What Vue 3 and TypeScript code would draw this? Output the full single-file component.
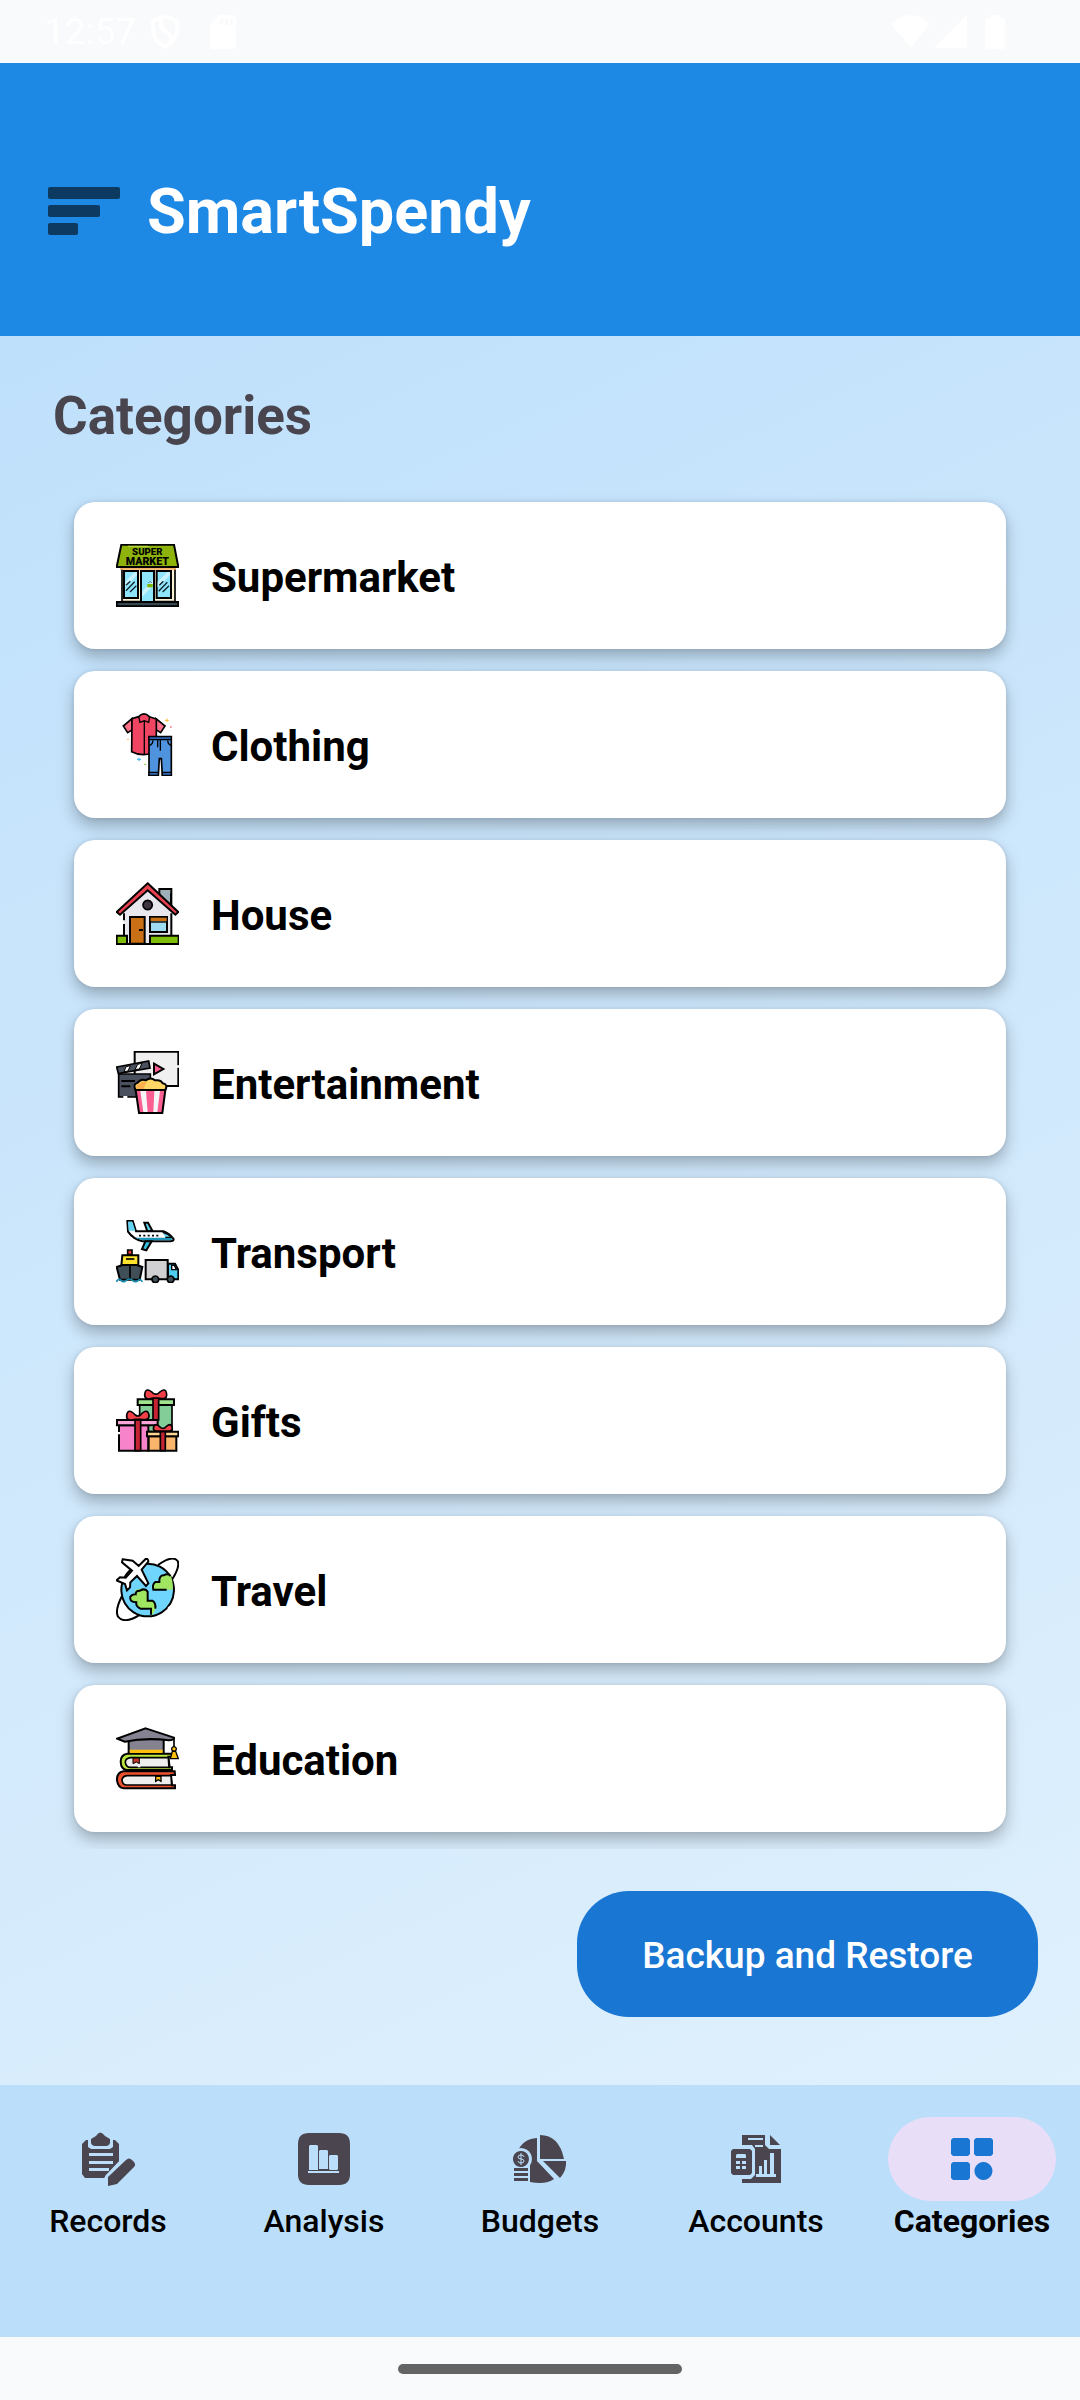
<script setup lang="ts">
interface Shape {
  d: string
  fill?: string
  stroke?: string
  w?: number
}

interface Category {
  name: string
  viewBox: string
  shapes: Shape[]
  sign?: { text: string; x: number; y: number; size: number }[]
}

interface NavItem {
  name: string
  active?: boolean
  shapes: Shape[]
}

const ink = '#4a454f'
const bar = '#bbdefb'
const accent = '#1976d2'

const categories: Category[] = [
  {
    name: 'Supermarket',
    viewBox: '48 72 189 189',
    shapes: [
      { d: 'M66 143H225V245H66Z', fill: '#fff3d6', w: 5 },
      { d: 'M60 144H228V149H60Z', fill: '#f7b267', w: 0 },
      { d: 'M72 153H114V234H72Z', fill: '#8fe5fb', w: 6 },
      { d: 'M170 153H213V234H170Z', fill: '#8fe5fb', w: 6 },
      { d: 'M123 153H162V246H123Z', fill: '#8fe5fb', w: 6 },
      { d: 'M76 185L104 156H111V166L76 202ZM173 185L202 156H210V166L173 202ZM126 215L159 180V197L126 231Z', fill: '#c9f4ff', w: 0 },
      { d: 'M78 196L91 184M78 212L104 185M90 216L109 197M178 196L190 184M176 214L202 187M188 216L207 197', stroke: '#10222b', w: 4 },
      { d: 'M142 192H158V202H142Z', fill: '#7cb500', w: 0 },
      { d: 'M145 189L150 184L156 189', stroke: '#6b7b86', w: 3 },
      { d: 'M64 74H222L235 141H50Z', fill: '#8eb40c', w: 6 },
      { d: 'M84 79H145', stroke: '#bfe04d', w: 3 },
      { d: 'M50 246H235V259H50Z', fill: '#37474f', w: 6 }
    ],
    sign: [
      { text: 'SUPER', x: 142, y: 105, size: 29 },
      { text: 'MARKET', x: 142, y: 135, size: 32 }
    ]
  },
  {
    name: 'Clothing',
    viewBox: '48 69 189 189',
    shapes: [
      { d: 'M96 86L70 108L83 128L98 119ZM168 86L195 108L182 128L168 119Z', fill: '#fb6f88', w: 5 },
      { d: 'M96 86L116 80Q132 64 148 80L169 87V192H146Q120 198 95 185Z', fill: '#ef4562', w: 5 },
      { d: 'M116 79L120 97L133 92L146 97L149 79M133 92V193', w: 4 },
      { d: 'M147 140H214V256H187L184 206H178L175 256H147Z', fill: '#4f92de', w: 5 },
      { d: 'M147 140H214V149H147Z', fill: '#2b62b0', w: 4 },
      { d: 'M147 247H175V256H147ZM187 247H214V256H187Z', fill: '#2f66b5', w: 4 },
      { d: 'M159 151Q158 163 149 166M203 151Q204 163 213 166M181 149V182M173 150V172', w: 4 },
      { d: 'M195 91H207M201 86V96', stroke: '#f8b739', w: 3 },
      { d: 'M111 208H123M117 203V213', stroke: '#55bff0', w: 4 },
      { d: 'M210 111H215', stroke: '#fb6f88', w: 4 },
      { d: 'M81 148H87', stroke: '#f8c04d', w: 3 },
      { d: 'M132 223H138', stroke: '#8ac926', w: 3 }
    ]
  },
  {
    name: 'House',
    viewBox: '48 66 189 189',
    shapes: [
      { d: 'M178 87H214V150L178 122Z', fill: '#9fb0b8', w: 6 },
      { d: 'M143 92L214 153V251H72V153Z', fill: '#e8e7ee', w: 0 },
      { d: 'M72 160V181M72 192V250M214 160V226M213 100V136', w: 6 },
      { d: 'M143 70L235 156L226 164L143 91L60 164L50 156Z', fill: '#e8414f', w: 6 },
      { d: 'M143 121A14 14 0 1 1 142.9 121Z', fill: '#3f3542', w: 5 },
      { d: 'M90 171H134V251H90Z', fill: '#c96f16', w: 6 },
      { d: 'M117 210H129', w: 6 },
      { d: 'M150 171H201V216H150Z', fill: '#9fdcf3', w: 6 },
      { d: 'M152 173H200V184H152Z', fill: '#c96f16', w: 0 },
      { d: 'M150 186H201', w: 4 },
      { d: 'M50 227H81V252H50ZM150 227H236V252H150Z', fill: '#7fbf0b', w: 6 },
      { d: 'M82 252H150', w: 6 }
    ]
  },
  {
    name: 'Entertainment',
    viewBox: '48 63 189 189',
    shapes: [
      { d: 'M104 65H235V168H104Z', fill: '#f0f0f0', w: 6 },
      { d: 'M231 106H240V113H231Z', fill: '#fff', w: 0 },
      { d: 'M162 101L190 117L162 133Z', fill: '#fb5f92', w: 6 },
      { d: 'M56 132H151V201H56Z', fill: '#4b505f', w: 5 },
      { d: 'M50 111L146 93L150 114L55 131Z', fill: '#4b505f', w: 5 },
      { d: 'M78 110L91 107L84 123L72 125ZM113 103L126 100L118 117L105 119Z', fill: '#fff', w: 3 },
      { d: 'M64 153H105M64 169H91', w: 6 },
      { d: 'M107 180H196L187 249H117Z', fill: '#fb5f92', w: 6 },
      { d: 'M121 183H138L143 246H130ZM163 183H180L172 246H160Z', fill: '#f5f5f8', w: 0 },
      { d: 'M107 180Q97 162 113 158Q123 145 137 151Q152 140 165 151Q183 148 188 160Q205 163 196 180Z', fill: '#ffd766', w: 6 },
      { d: 'M110 177Q105 163 119 161Q129 152 140 156L130 177Z', fill: '#fbb04e', w: 0 },
      { d: 'M70 201H82', stroke: '#fff', w: 6 }
    ]
  },
  {
    name: 'Transport',
    viewBox: '48 60 189 189',
    shapes: [
      { d: 'M133 68H144L158 94H142Z', fill: '#62d4f2', w: 6 },
      { d: 'M82 62H98L108 94H190Q207 99 221 117Q221 124 210 124H128Q100 118 84 95Z', fill: '#fff', w: 6 },
      { d: 'M84 65H97L106 92H86Z', fill: '#62d4f2', w: 0 },
      { d: 'M103 113H216Q218 121 208 121H128Z', fill: '#1e94b6', w: 0 },
      { d: 'M117 107H123M130 107H136M143 107H149M156 107H162M169 107H175', w: 5 },
      { d: 'M188 97Q206 102 215 112H196', fill: '#62d4f2', w: 4 },
      { d: 'M136 124L126 147L139 151L155 124Z', fill: '#38bcdd', w: 6 },
      { d: 'M83 150H96V164H83Z', fill: '#e23c2f', w: 5 },
      { d: 'M67 166H115V197H64Z', fill: '#ffe32e', w: 6 },
      { d: 'M78 177H103', w: 5 },
      { d: 'M50 201L68 195H110L127 201L119 239H60Z', fill: '#3f4e57', w: 6 },
      { d: 'M90 194V240', w: 5 },
      { d: 'M49 246Q55 233 63 241Q70 249 79 241Q89 233 98 241Q106 249 115 241Q122 235 127 246', stroke: '#168cb0', w: 5 },
      { d: 'M137 180H203V238H137Z', fill: '#d0d0d2', w: 6 },
      { d: 'M204 191H225L235 210V238H204Z', fill: '#4fcdf0', w: 6 },
      { d: 'M215 196H223L229 209H215Z', fill: '#fff', w: 4 },
      { d: 'M166 228A10 10 0 1 1 165.900 228ZM212 228A10 10 0 1 1 211.900 228Z', fill: '#3f4e57', w: 5 }
    ]
  },
  {
    name: 'Gifts',
    viewBox: '48 57 189 189',
    shapes: [
      { d: 'M119 105H216V185H119Z', fill: '#83ce98', w: 5 },
      { d: 'M113 88H222V105H113Z', fill: '#9fe391', w: 6 },
      { d: 'M159 84H176V150H159Z', fill: '#c42434', w: 5 },
      { d: 'M160 84Q134 92 134 74Q137 48 160 70Q168 75 175 70Q198 48 200 74Q201 91 176 84Z', fill: '#f24049', w: 5 },
      { d: 'M57 166H145V242H57Z', fill: '#f783ca', w: 6 },
      { d: 'M51 150H173V166H51Z', fill: '#f9a5d8', w: 6 },
      { d: 'M105 150H122V242H105Z', fill: '#c42434', w: 5 },
      { d: 'M105 148Q78 155 80 136Q84 112 106 135Q114 141 121 135Q143 112 147 136Q149 152 122 148Z', fill: '#f24049', w: 5 },
      { d: 'M146 199H229V242H146Z', fill: '#fab56d', w: 6 },
      { d: 'M141 185H235V199H141Z', fill: '#ffd391', w: 6 },
      { d: 'M181 185H196V242H181Z', fill: '#c42434', w: 5 },
      { d: 'M181 183Q156 186 161 171Q166 156 182 173Q188 177 195 173Q212 156 216 171Q221 186 196 183Z', fill: '#f24049', w: 5 },
      { d: 'M57 186V193', stroke: '#fff', w: 6 }
    ]
  },
  {
    name: 'Travel',
    viewBox: '48 54 189 189',
    shapes: [
      { d: 'M174 75Q218 44 233 63Q242 84 207 132Q169 186 120 224Q74 254 54 230Q44 211 66 168', w: 6 },
      { d: 'M143 71A79 79 0 1 1 142.900 71Z', fill: '#70d5fc', w: 6 },
      { d: 'M183 107Q200 98 212 107Q220 125 218 149H159Q156 132 166 124H180Z', fill: '#a0e661', w: 0 },
      { d: 'M200 149H160Q156 133 166 126H178Q177 106 191 106Q204 99 212 108', w: 6 },
      { d: 'M105 151Q127 140 144 153V181H158Q168 187 166 205Q163 224 153 226V206H121Q107 199 109 187Q87 186 91 170Q95 162 107 163Z', fill: '#a0e661', w: 0 },
      { d: 'M153 224V206H121Q106 199 109 187Q87 186 91 170Q97 162 107 163Q107 151 120 152Q136 143 143 155V182H157Q168 188 166 206', w: 6 },
      { d: 'M68 58L98 62L116 78L137 57Q145 55 145 65L125 89L145 130L138 138L111 108L91 127L90 142L81 151L75 132L50 121L60 112L77 113L96 92L66 67Z', fill: '#fff', w: 6 },
      { d: 'M204 206L209 200', stroke: '#fff', w: 5 }
    ]
  },
  {
    name: 'Education',
    viewBox: '48 51 189 189',
    shapes: [
      { d: 'M216 131H82Q62 134 62 155Q63 178 80 180H216V172H209L205 140H216Z', fill: '#b9e63e', w: 6 },
      { d: 'M205 143H91Q76 145 76 157Q78 171 90 172H207Z', fill: '#eee', w: 5 },
      { d: 'M224 184H70Q50 188 51 211Q54 233 71 235H225V226H216L213 195H225Z', fill: '#ed512e', w: 6 },
      { d: 'M213 197H81Q66 199 66 211Q68 225 80 225H215Z', fill: '#eee', w: 5 },
      { d: 'M99 144H118V161L109 156L99 161Z', fill: '#c33628', w: 3 },
      { d: 'M167 199H183V214L175 209L167 214Z', fill: '#ffc10b', w: 4 },
      { d: 'M86 88H191V128H86Z', fill: '#858391', w: 6 },
      { d: 'M89 119H188V129H89Z', fill: '#ffc10b', w: 0 },
      { d: 'M137 55L222 83Q222 90 206 91Q138 82 74 95L52 86Z', fill: '#858391', w: 6 },
      { d: 'M222 85V113', w: 5 },
      { d: 'M222 110A7 7 0 1 1 221.900 110Z', fill: '#ffc10b', w: 4 },
      { d: 'M217 124H227L235 146H211Z', fill: '#ffc10b', w: 4 },
      { d: 'M113 169H121', stroke: '#fff', w: 6 }
    ]
  }
]

const navItems: NavItem[] = [
  {
    name: 'Records',
    shapes: [
      { d: 'M9 12H38L42 16V34L27 50H8L5 46V16Z', fill: ink },
      { d: 'M11 9H36V19L33 21H14L11 19Z', fill: bar },
      { d: 'M14 11L19 8Q23 1 28 8L33 11V15Q32 18 29 18H18Q15 18 14 15Z', fill: ink },
      { d: 'M12 25H36V28H12ZM12 33H36V36H12ZM12 40H32V43H12Z', fill: bar },
      { d: 'M29 59L28 48L46 29H56L60 38L42 59Z', fill: bar },
      { d: 'M49 32Q52 29 55 32Q60 36 57 39L40 56L31 58V49Z', fill: ink }
    ]
  },
  {
    name: 'Analysis',
    shapes: [
      { d: 'M16 5H46Q57 5 57 16V46Q57 57 46 57H16Q5 57 5 46V16Q5 5 16 5Z', fill: ink },
      { d: 'M17 17H24L25 18V42H16V18ZM27 22H34L35 23V41H26V23ZM37 27H44L45 28V41L44 42H37L36 41V28ZM15 43H46V45H15Z', fill: bar }
    ]
  },
  {
    name: 'Budgets',
    shapes: [
      { d: 'M28 10V33L45 51Q37 57 21 54V38L8 25Q13 11 28 10Z', fill: ink },
      { d: 'M31 7Q50 7 55 31H31ZM34 33H57Q58 42 51 50Z', fill: ink },
      { d: 'M12 20A11 11 0 1 1 11.900 20Z', fill: bar },
      { d: 'M2 37H21V56H2Z', fill: bar },
      { d: 'M12 23A8 8 0 1 1 11.900 23Z', fill: ink },
      { d: 'M15 29Q15 27 12 27T9 29T12 31T15 33T12 35T9 33M12 25V37', stroke: bar, w: 1 },
      { d: 'M5 40H19V43H5ZM5 45H19V48H5ZM5 50H19V53H5Z', fill: ink }
    ]
  },
  {
    name: 'Accounts',
    shapes: [
      { d: 'M17 7H40V17L44 21H56V55H17V51H26L30 47V21L27 17H17Z', fill: ink },
      { d: 'M45 7L55 17H45Z', fill: ink },
      { d: 'M23 10H38V12H23ZM30 17H38V19H30Z', fill: bar },
      { d: 'M34 38H37V46H39V32H42V46H45V25H49V46H51V49H31V46H34Z', fill: bar },
      { d: 'M8 21H25L27 23V45L25 47H8L6 45V23Z', fill: ink },
      { d: 'M11 27L12 26H20L21 27V30H11ZM11 33H15V36H11ZM17 33H21V36H17ZM11 38H15V41H11ZM17 38H21V41H17Z', fill: bar }
    ]
  },
  {
    name: 'Categories',
    active: true,
    shapes: [
      { d: 'M12 10H27L29 12V26L27 28H12L10 26V12ZM35 10H50L52 12V26L50 28H35L33 26V12ZM12 34H27L29 36V50L27 52H12L10 50V36Z', fill: accent },
      { d: 'M42.500 34A9 9 0 1 1 42.400 34Z', fill: accent }
    ]
  }
]
</script>

<template>
  <div class="screen">
    <div class="status">
      <div class="status-group">
        <span class="clock">12:57</span>
        <svg class="shield" viewBox="0 0 30 36" aria-hidden="true">
          <path d="M15 2L27 7V16Q26 28 15 33Q4 28 3 16V7ZM11 4V12Q12 16 19 20Q23 24 20 29" fill="none" stroke="#fff" stroke-width="4" />
        </svg>
        <svg class="card-chip" viewBox="0 0 26 34" aria-hidden="true">
          <path d="M10 0H24L26 2V32L24 34H2L0 32V10Z" fill="#fff" />
          <path d="M10 4H13V10H10ZM15 4H18V10H15ZM20 4H23V10H20Z" fill="#f9fafc" />
        </svg>
      </div>
      <div class="status-group">
        <svg class="signals" viewBox="0 0 114 34" aria-hidden="true">
          <path d="M0 9Q20 -9 39 9L20 33ZM76 0V33H43ZM100 0H108V3H112L114 5V32L112 34H96L94 32V5L96 3H100Z" fill="#fff" />
        </svg>
      </div>
    </div>

    <div class="app">
      <header class="topbar">
        <button class="menu" type="button" aria-label="Menu">
          <span class="line long"></span>
          <span class="line mid"></span>
          <span class="line short"></span>
        </button>
        <h1>SmartSpendy</h1>
      </header>

      <main>
        <h2>Categories</h2>
        <ul class="list">
          <li v-for="c in categories" :key="c.name">
            <button class="card" type="button">
              <svg class="picture" :viewBox="c.viewBox" aria-hidden="true">
                <path
                  v-for="(s, i) in c.shapes"
                  :key="i"
                  :d="s.d"
                  :fill="s.fill ?? 'none'"
                  :stroke="s.w ? (s.stroke ?? '#000') : 'none'"
                  :stroke-width="s.w"
                />
                <text v-for="t in c.sign" :key="t.text" :x="t.x" :y="t.y" :font-size="t.size" class="sign">{{ t.text }}</text>
              </svg>
              <span class="name">{{ c.name }}</span>
            </button>
          </li>
        </ul>
        <button class="backup" type="button">Backup and Restore</button>
      </main>

      <nav>
        <a v-for="n in navItems" :key="n.name" href="#" :class="{ active: n.active }">
          <span class="pill">
            <svg viewBox="0 0 63 63" aria-hidden="true">
              <path
                v-for="(s, i) in n.shapes"
                :key="i"
                :d="s.d"
                :fill="s.fill ?? 'none'"
                :stroke="s.stroke ?? 'none'"
                :stroke-width="s.w"
              />
            </svg>
          </span>
          <span class="label">{{ n.name }}</span>
        </a>
      </nav>
    </div>

    <div class="gesture"><span></span></div>
  </div>
</template>

<style>
body {
  background: #f9fafc;
}
</style>

<style scoped>
.screen {
  display: flex;
  flex-direction: column;
  min-height: 100vh;
  font-family: Roboto, sans-serif;
  color: #000;
}

button {
  border: 0;
  padding: 0;
  font-family: inherit;
  cursor: pointer;
}

.status {
  display: flex;
  align-items: center;
  justify-content: space-between;
  height: 63px;
  padding: 0 75px 0 44px;
  color: #fff;
}

.status-group {
  display: flex;
  align-items: center;
}

.clock {
  font-size: 37px;
  line-height: 44px;
}

.shield {
  width: 30px;
  height: 36px;
  margin-left: 14px;
}

.card-chip {
  width: 26px;
  height: 34px;
  margin-left: 30px;
}

.signals {
  width: 114px;
  height: 34px;
}

.app {
  flex: 1;
  display: flex;
  flex-direction: column;
  background: linear-gradient(155deg, #bbdefb, #e3f2fd);
}

.topbar {
  display: flex;
  align-items: center;
  gap: 27px;
  padding: 112px 48px 87px;
  background: #1e88e5;
}

.menu {
  display: flex;
  flex-direction: column;
  gap: 6px;
  width: 72px;
  padding-bottom: 3px;
  background: none;
}

.line {
  height: 12px;
  border-radius: 2px;
  background: #0d3a60;
}

.long {
  width: 72px;
}

.mid {
  width: 52px;
}

.short {
  width: 30px;
}

h1 {
  margin: 0;
  font-size: 63px;
  line-height: 74px;
  font-weight: 700;
  color: #fff;
}

main {
  flex: 1;
  display: flex;
  flex-direction: column;
}

h2 {
  margin: 49px 53px 33px;
  font-size: 53px;
  line-height: 62px;
  font-weight: 700;
  color: #49454f;
}

.list {
  display: flex;
  flex-direction: column;
  gap: 22px;
  margin: 0;
  padding: 22px 74px 17px;
  list-style: none;
  overflow: hidden;
}

.card {
  display: flex;
  align-items: center;
  gap: 32px;
  width: 100%;
  height: 147px;
  padding: 0 42px;
  border-radius: 21px;
  background: #fff;
  box-shadow: 0 8px 16px rgba(0, 0, 0, 0.26), 0 0 4px rgba(0, 0, 0, 0.1);
  font-size: 42px;
  line-height: 50px;
  font-weight: 700;
  color: #000;
}

.name {
  padding-top: 4px;
}

.picture {
  width: 63px;
  height: 63px;
}

.sign {
  font-family: Roboto, sans-serif;
  font-weight: 900;
  text-anchor: middle;
}

.backup {
  align-self: flex-end;
  min-width: 461px;
  margin: 42px 42px 68px;
  padding: 43px 63px 39px;
  border-radius: 52px;
  background: #1976d2;
  font-size: 37px;
  line-height: 44px;
  font-weight: 500;
  color: #fff;
}

nav {
  display: flex;
  padding: 32px 0 96px;
  background: #bbdefb;
}

nav a {
  flex: 1;
  display: flex;
  flex-direction: column;
  align-items: center;
  color: #000;
  text-decoration: none;
}

.pill {
  display: flex;
  align-items: center;
  justify-content: center;
  width: 168px;
  height: 84px;
  border-radius: 42px;
}

.pill svg {
  width: 63px;
  height: 63px;
}

.active .pill {
  background: #e8def8;
}

.label {
  font-size: 32px;
  line-height: 40px;
  font-weight: 500;
}

.active .label {
  font-weight: 700;
}

.gesture {
  display: flex;
  align-items: center;
  justify-content: center;
  height: 63px;
}

.gesture span {
  width: 284px;
  height: 10px;
  border-radius: 5px;
  background: #646464;
}
</style>
